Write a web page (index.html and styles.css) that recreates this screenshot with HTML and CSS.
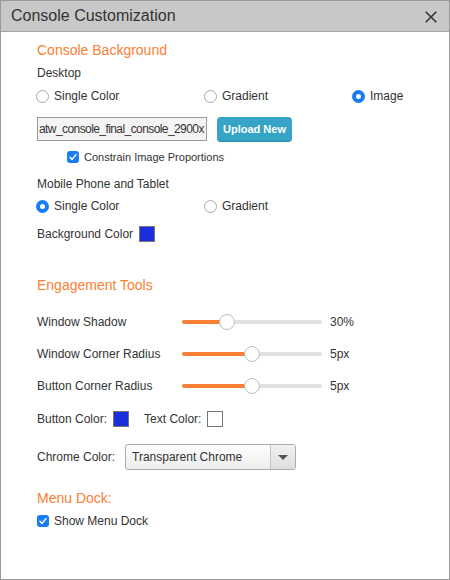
FILE: index.html
```html
<!DOCTYPE html>
<html>
<head>
<meta charset="utf-8">
<link rel="stylesheet" href="styles.css">
</head>
<body>
<div class="win">
  <div class="titlebar">
    <span class="title">Console Customization</span>
    <svg class="close" width="12" height="12" viewBox="0 0 12 12"><path d="M0.7 0.7 L11.3 11.3 M11.3 0.7 L0.7 11.3" stroke="#333" stroke-width="1.6" fill="none"/></svg>
  </div>
  <div class="content">
    <div class="heading first">Console Background</div>
    <div class="label desktop">Desktop</div>
    <div class="radios r-desktop">
      <span class="radio col1"><i class="circle"></i>Single Color</span>
      <span class="radio col2"><i class="circle"></i>Gradient</span>
      <span class="radio"><i class="circle on"></i>Image</span>
    </div>
    <div class="file-row">
      <div class="file-input">atw_console_final_console_2900x</div>
      <div class="upload">Upload New</div>
    </div>
    <div class="check-row constrain"><i class="check"><svg width="12" height="12" viewBox="0 0 12 12"><path d="M3 6.2 L5.1 8.4 L9 3.6" stroke="#fff" stroke-width="1.5" fill="none" stroke-linecap="round" stroke-linejoin="round"/></svg></i>Constrain Image Proportions</div>
    <div class="label mobile">Mobile Phone and Tablet</div>
    <div class="radios r-mobile">
      <span class="radio col1"><i class="circle on"></i>Single Color</span>
      <span class="radio col2"><i class="circle"></i>Gradient</span>
    </div>
    <div class="color-row bg-row">Background Color<i class="swatch blue"></i></div>

    <div class="heading engage">Engagement Tools</div>
    <div class="slider-row first-slider">
      <span class="slider-label">Window Shadow</span>
      <div class="track"><div class="fill" style="width:32%"></div><div class="thumb" style="left:32%"></div></div>
      <span class="slider-value">30%</span>
    </div>
    <div class="slider-row">
      <span class="slider-label">Window Corner Radius</span>
      <div class="track"><div class="fill" style="width:50%"></div><div class="thumb" style="left:50%"></div></div>
      <span class="slider-value">5px</span>
    </div>
    <div class="slider-row">
      <span class="slider-label">Button Corner Radius</span>
      <div class="track"><div class="fill" style="width:50%"></div><div class="thumb" style="left:50%"></div></div>
      <span class="slider-value">5px</span>
    </div>
    <div class="color-row btn-row">
      <span>Button Color:</span><i class="swatch blue"></i>
      <span class="text-color">Text Color:</span><i class="swatch white"></i>
    </div>
    <div class="chrome-row">
      <span class="chrome-label">Chrome Color:</span>
      <div class="select">
        <span class="select-text">Transparent Chrome</span>
        <span class="select-arrow"><i class="tri"></i></span>
      </div>
    </div>

    <div class="heading dock">Menu Dock:</div>
    <div class="check-row show-dock"><i class="check"><svg width="12" height="12" viewBox="0 0 12 12"><path d="M3 6.2 L5.1 8.4 L9 3.6" stroke="#fff" stroke-width="1.5" fill="none" stroke-linecap="round" stroke-linejoin="round"/></svg></i>Show Menu Dock</div>
  </div>
</div>
</body>
</html>
```

FILE: styles.css
```css
body {
  margin: 0;
  font-family: "Liberation Sans", Arial, Helvetica, sans-serif;
  font-size: 12px;
  color: #333;
  background: #fff;
}
.win {
  width: 450px;
  height: 580px;
  box-sizing: border-box;
  border: 1px solid #999;
  background: #fff;
}
.titlebar {
  height: 30px;
  background: #c8c8c8;
  border-bottom: 1px solid #a3a3a3;
  display: flex;
  align-items: center;
  justify-content: space-between;
  padding: 0 12px 0 10px;
}
.title {
  font-size: 16px;
  color: #333;
}
.close {
  display: block;
  margin-top: 1px;
}
.content {
  padding: 8px 0 0 36px;
}
.heading {
  height: 20px;
  line-height: 20px;
  font-size: 14px;
  color: #fb8035;
}
.label {
  height: 18px;
  line-height: 18px;
}
.desktop { margin-top: 4px; }
.radios {
  display: flex;
  align-items: center;
  height: 20px;
  margin-left: -1px;
}
.r-desktop { margin-top: 4px; }
.radio {
  display: flex;
  align-items: center;
  gap: 5px;
}
.col1 { width: 168px; }
.col2 { width: 148px; }
.circle {
  width: 13px;
  height: 13px;
  box-sizing: border-box;
  border-radius: 50%;
  border: 1px solid #a8a8a8;
  background: #fff;
  display: inline-block;
}
.circle.on {
  border: 4.5px solid #1a7cf5;
  background: #fff;
}
.file-row {
  display: flex;
  align-items: flex-start;
  gap: 10px;
  margin-top: 11px;
  height: 25px;
}
.file-input {
  width: 170px;
  height: 24px;
  box-sizing: border-box;
  border: 1px solid #9a9a9a;
  background: #f4f4f4;
  line-height: 22px;
  padding-left: 1px;
  letter-spacing: -0.58px;
  white-space: nowrap;
  overflow: hidden;
}
.upload {
  width: 75px;
  height: 25px;
  box-sizing: border-box;
  background: #35a4c6;
  border-radius: 4px;
  border-bottom: 1px solid #2a87a3;
  color: #fff;
  font-size: 11px;
  font-weight: bold;
  line-height: 24px;
  text-align: center;
}
.check-row {
  display: flex;
  align-items: center;
  gap: 5px;
}
.constrain {
  margin-top: 7px;
  height: 16px;
  padding-left: 30px;
  font-size: 11px;
}
.check {
  width: 12px;
  height: 12px;
  border-radius: 3px;
  background: #1a7cf5;
  display: block;
}
.check svg { display: block; }
.mobile { margin-top: 10px; }
.r-mobile { margin-top: 3px; }
.color-row {
  display: flex;
  align-items: center;
  height: 20px;
}
.bg-row {
  margin-top: 8px;
  gap: 6px;
}
.swatch {
  width: 16px;
  height: 16px;
  box-sizing: border-box;
  border: 1px solid #777;
  display: block;
}
.swatch.blue { background: #1a2fdb; }
.swatch.white { background: #fff; }
.engage { margin-top: 31px; }
.slider-row {
  display: flex;
  align-items: center;
  height: 20px;
  margin-top: 12px;
}
.first-slider { margin-top: 17px; }
.slider-label {
  width: 145px;
}
.track {
  position: relative;
  width: 140px;
  height: 4px;
  border-radius: 2px;
  background: #e2e2e2;
}
.fill {
  height: 4px;
  border-radius: 2px;
  background: #fb8035;
}
.thumb {
  position: absolute;
  top: -6px;
  width: 16px;
  height: 16px;
  margin-left: -8px;
  box-sizing: border-box;
  border-radius: 50%;
  border: 1px solid #bdbdbd;
  background: #fff;
}
.slider-value {
  margin-left: 8px;
}
.btn-row {
  margin-top: 13px;
  gap: 6px;
}
.text-color { margin-left: 9px; }
.chrome-row {
  display: flex;
  align-items: center;
  margin-top: 15px;
  height: 26px;
}
.chrome-label { width: 88px; }
.select {
  width: 171px;
  height: 26px;
  box-sizing: border-box;
  border: 1px solid #acacac;
  border-radius: 3px;
  background: linear-gradient(#fefefe, #ededed);
  display: flex;
  align-items: stretch;
  overflow: hidden;
}
.select-text {
  flex: 1;
  line-height: 24px;
  padding-left: 6px;
}
.select-arrow {
  width: 24px;
  border-left: 1px solid #c4c4c4;
  background: linear-gradient(#f1f1f1, #dedede);
  display: flex;
  align-items: center;
  justify-content: center;
}
.tri {
  width: 0;
  height: 0;
  border-left: 5px solid transparent;
  border-right: 5px solid transparent;
  border-top: 5px solid #555;
  display: block;
}
.dock { margin-top: 18px; }
.show-dock {
  margin-top: 4px;
  height: 18px;
}
```
